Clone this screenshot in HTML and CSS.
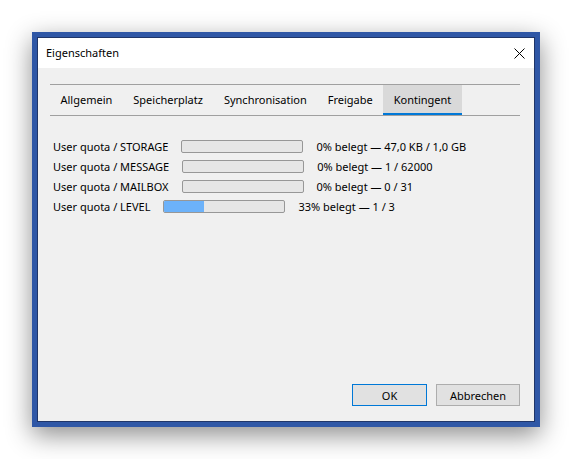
FILE: index.html
```html
<!DOCTYPE html>
<html lang="de">
<head>
  <meta charset="UTF-8">
  <title>Eigenschaften</title>
  <link rel="stylesheet" href="styles.css">
</head>
<body>
  <!-- Dialog window -->
  <div class="window">
    <div class="frame">
      <div class="title-bar">
        <span class="title">Eigenschaften</span>
        <svg class="close" width="11" height="11" viewBox="0 0 11 11">
          <path d="M0.5 0.5 L10.5 10.5 M10.5 0.5 L0.5 10.5" stroke="#000" stroke-width="1" fill="none"/>
        </svg>
      </div>

      <div class="dialog-body">
        <!-- Tabs -->
        <div class="tabs">
          <div class="tab">Allgemein</div>
          <div class="tab">Speicherplatz</div>
          <div class="tab">Synchronisation</div>
          <div class="tab">Freigabe</div>
          <div class="tab active">Kontingent</div>
        </div>

        <!-- Quota rows -->
        <div class="quota-list">
          <div class="quota-row">
            <span class="quota-label">User quota / STORAGE</span>
            <div class="bar"><div class="bar-fill" style="width: 0%"></div></div>
            <span class="quota-value">0% belegt — 47,0 KB / 1,0 GB</span>
          </div>
          <div class="quota-row">
            <span class="quota-label">User quota / MESSAGE</span>
            <div class="bar"><div class="bar-fill" style="width: 0%"></div></div>
            <span class="quota-value">0% belegt — 1 / 62000</span>
          </div>
          <div class="quota-row">
            <span class="quota-label">User quota / MAILBOX</span>
            <div class="bar"><div class="bar-fill" style="width: 0%"></div></div>
            <span class="quota-value">0% belegt — 0 / 31</span>
          </div>
          <div class="quota-row">
            <span class="quota-label">User quota / LEVEL</span>
            <div class="bar"><div class="bar-fill" style="width: 33%"></div></div>
            <span class="quota-value">33% belegt — 1 / 3</span>
          </div>
        </div>

        <!-- Buttons -->
        <div class="buttons">
          <button class="btn default">OK</button>
          <button class="btn">Abbrechen</button>
        </div>
      </div>
    </div>
  </div>
</body>
</html>
```

FILE: styles.css
```css
* {
  margin: 0;
  padding: 0;
  box-sizing: border-box;
}

body {
  font-family: "Noto Sans", "DejaVu Sans", sans-serif;
  font-size: 11px;
  color: #000;
  background: #fff;
  padding: 32px 0 0 32px;
  min-height: 100vh;
}

/* Window frame */
.window {
  width: 508px;
  height: 395px;
  border: 5px solid #2f57a6;
  box-shadow: 0 8px 24px rgba(0, 0, 0, 0.45);
}

.frame {
  height: 100%;
  border: 1px solid #1f3568;
  display: flex;
  flex-direction: column;
}

.title-bar {
  height: 30px;
  flex: none;
  background: #fff;
  display: flex;
  align-items: center;
  justify-content: space-between;
  padding: 0 9px 0 8px;
}

.title {
  line-height: 30px;
}

.close {
  display: block;
}

/* Dialog content */
.dialog-body {
  flex: 1;
  background: #f0f0f0;
  display: flex;
  flex-direction: column;
  padding: 16px 14px 15px 12px;
}

.tabs {
  display: flex;
  height: 32px;
  border-top: 1px solid #a0a0a0;
  border-bottom: 1px solid #a0a0a0;
}

.tab {
  padding: 0 10.5px;
  line-height: 30px;
  height: 30px;
}

.tab.active {
  background: #d9d9d9;
  border-bottom: 2px solid #0078d7;
  line-height: 28px;
  padding-top: 1px;
}

.quota-list {
  display: flex;
  flex-direction: column;
  padding: 20px 0 0 3px;
}

.quota-row {
  display: flex;
  align-items: center;
  gap: 13px;
  height: 20px;
}

.bar {
  width: 122px;
  height: 13px;
  border: 1px solid #979797;
  border-radius: 2px;
  background: #e6e6e6;
  overflow: hidden;
}

.bar-fill {
  height: 100%;
  background: #6cb2fa;
}

/* Buttons */
.buttons {
  margin-top: auto;
  display: flex;
  justify-content: flex-end;
  gap: 9px;
}

.btn {
  font: inherit;
  color: #000;
  height: 22px;
  background: #e1e1e1;
  border: 1px solid #adadad;
}

.btn.default {
  width: 75px;
  border-color: #0078d7;
}

.btn:not(.default) {
  width: 84px;
}
```
